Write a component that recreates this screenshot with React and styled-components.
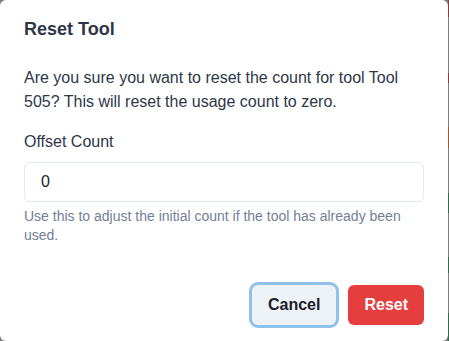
import React, { useState } from "react";
import styled, { createGlobalStyle } from "styled-components";

// reset tool dialog

const GlobalStyle = createGlobalStyle`
  html, body {
    margin: 0;
    padding: 0;
    background-color: #7d7d7d; // overlay
    font-family: "Liberation Sans", Arial, Helvetica, sans-serif;
  }
  * {
    box-sizing: border-box;
  }
`;

const Screen = styled.div`
  display: flex;
  flex-direction: row;
  align-items: flex-start;
  width: 100%;
  height: 341px;
`;

const PageEdge = styled.div`
  // the page behind the overlay, only a sliver shows
  flex: 1;
  align-self: stretch;
  background: linear-gradient(
    to bottom,
    #8a3b3b 0px,
    #8a3b3b 17px,
    #7d7d7d 17px,
    #7d7d7d 73px,
    #8a3b3b 73px,
    #8a3b3b 83px,
    #7d7d7d 83px,
    #7d7d7d 127px,
    #9a5a2e 127px,
    #9a5a2e 148px,
    #7d7d7d 148px,
    #7d7d7d 193px,
    #2f6b47 193px,
    #2f6b47 213px,
    #7d7d7d 213px,
    #7d7d7d 257px,
    #2f6b47 257px,
    #2f6b47 273px,
    #7d7d7d 273px,
    #7d7d7d 313px,
    #2f6b47 313px
  );
`;

const Dialog = styled.section`
  width: 448px;
  background-color: #ffffff;
  border-radius: 6px;
  display: flex;
  flex-direction: column;
  color: #2d3748;
`;

const Header = styled.header`
  padding: 16px 24px;
  font-size: 18px;
  line-height: 27px;
  font-weight: 600;
  color: #2d3748;
`;

const Body = styled.div`
  padding: 7px 24px 8px;
  display: flex;
  flex-direction: column;
`;

const Message = styled.p`
  margin: 0 0 16px;
  font-size: 16px;
  line-height: 24px;
  color: #2d3748;
`;

const Field = styled.div`
  display: flex;
  flex-direction: column;
  margin-bottom: 16px;
`;

const Label = styled.label`
  font-size: 16px;
  line-height: 24px;
  font-weight: 400;
  color: #2d3748;
  margin-bottom: 8px;
`;

const NumberInput = styled.input`
  width: 100%;
  height: 40px;
  padding: 0 16px;
  border: 1px solid #e2e8f0;
  border-radius: 6px;
  font-family: inherit;
  font-size: 16px;
  color: #1a202c;
  background-color: #ffffff;
  outline: none;
`;

const Helper = styled.div`
  margin-top: 5px;
  font-size: 14px;
  line-height: 19px;
  color: #718096;
`;

const Footer = styled.footer`
  display: flex;
  justify-content: flex-end;
  align-items: center;
  gap: 12px;
  padding: 16px 24px;
`;

const Button = styled.button`
  height: 40px;
  padding: 0 16px;
  border: none;
  border-radius: 6px;
  font-family: inherit;
  font-size: 16px;
  font-weight: 600;
  cursor: pointer;
  background-color: ${props => (props.$danger ? "#e53e3e" : "#edf2f7")};
  color: ${props => (props.$danger ? "#ffffff" : "#1a202c")};
  box-shadow: ${props =>
    props.$focused ? "0 0 0 3px rgba(66, 153, 225, 0.6)" : "none"};
`;

function App() {
  const [offset, setOffset] = useState("0");

  return (
    <>
      <GlobalStyle />
      <Screen>
        <Dialog role="dialog">
          <Header>Reset Tool</Header>
          <Body>
            <Message>
              Are you sure you want to reset the count for tool Tool 505? This
              will reset the usage count to zero.
            </Message>
            <Field>
              <Label htmlFor="offset_count">Offset Count</Label>
              <NumberInput
                id="offset_count"
                type="text"
                value={offset}
                onChange={e => setOffset(e.target.value)}
              />
              <Helper>
                Use this to adjust the initial count if the tool has already
                been used.
              </Helper>
            </Field>
          </Body>
          <Footer>
            <Button $focused>Cancel</Button>
            <Button $danger>Reset</Button>
          </Footer>
        </Dialog>
        <PageEdge />
      </Screen>
    </>
  );
}

export default App;
